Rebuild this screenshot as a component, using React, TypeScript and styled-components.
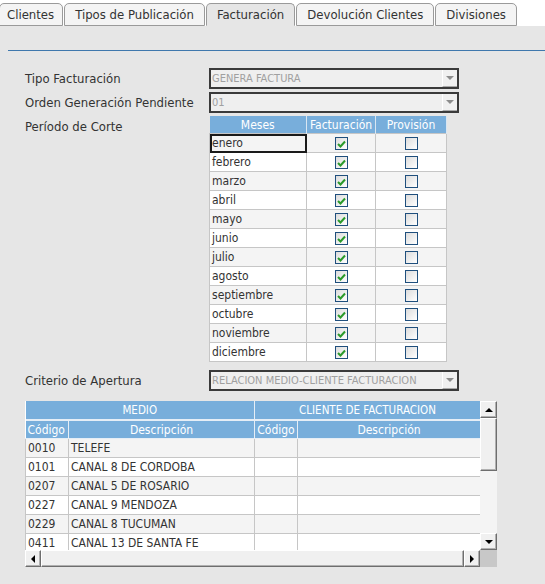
import React from 'react';
import styled, { createGlobalStyle, css } from 'styled-components';

const GlobalStyle = createGlobalStyle`
  body {
    margin: 0;
    background: #ffffff;
    font-family: "DejaVu Sans Condensed", "DejaVu Sans", sans-serif;
    color: #333333;
  }
`;

const TABS = ['Clientes', 'Tipos de Publicación', 'Facturación', 'Devolución Clientes', 'Divisiones'];
const ACTIVE_TAB = 'Facturación';

const MONTHS = [
  'enero', 'febrero', 'marzo', 'abril', 'mayo', 'junio',
  'julio', 'agosto', 'septiembre', 'octubre', 'noviembre', 'diciembre',
];

const MEDIOS = [
  { code: '0010', desc: 'TELEFE' },
  { code: '0101', desc: 'CANAL 8 DE CORDOBA' },
  { code: '0207', desc: 'CANAL 5 DE ROSARIO' },
  { code: '0227', desc: 'CANAL 9 MENDOZA' },
  { code: '0229', desc: 'CANAL 8 TUCUMAN' },
  { code: '0411', desc: 'CANAL 13 DE SANTA FE' },
];

const Page = styled.div`
  width: 545px;
  height: 584px;
  overflow: hidden;
  display: flex;
  flex-direction: column;
`;

const TabBar = styled.div`
  display: flex;
  height: 26px;
  padding-top: 3px;
  box-sizing: border-box;
  background: #ffffff;
`;

const Tab = styled.div<{ $active?: boolean }>`
  display: flex;
  align-items: center;
  padding: 0 10px;
  margin-right: 1px;
  font-size: 13px;
  color: #333333;
  border: 1px solid #9a9a9a;
  border-radius: 5px 5px 0 0;
  background: #f4f4f4;
  &:first-child {
    padding: 0 8px 0 7px;
    margin-left: -1px;
  }
  ${({ $active }) =>
    $active &&
    css`
      background: #e6e6e6;
      border-bottom-color: #e6e6e6;
    `}
`;

const Content = styled.div`
  flex: 1;
  background: #e6e6e6;
  padding: 24px 0 0 0;
`;

const Divider = styled.div`
  margin-left: 8px;
  height: 1px;
  background: #3f78ad;
`;

const Form = styled.div`
  padding: 17px 0 0 25px;
  display: flex;
  flex-direction: column;
`;

const FieldRow = styled.div<{ $gap?: number }>`
  display: flex;
  align-items: flex-start;
  margin-bottom: ${({ $gap }) => $gap ?? 3}px;
`;

const Label = styled.div`
  width: 184px;
  height: 21px;
  line-height: 21px;
  font-size: 13px;
  color: #333333;
`;

const Select = styled.div`
  width: 250px;
  height: 21px;
  box-sizing: border-box;
  border: 2px solid #3a3a3a;
  background: #efefef;
  display: flex;
  align-items: center;
`;

const SelectValue = styled.div`
  flex: 1;
  padding-left: 1px;
  font-size: 11px;
  color: #a0a0a0;
  white-space: nowrap;
  overflow: hidden;
`;

const SelectArrow = styled.div`
  width: 15px;
  height: 100%;
  box-sizing: border-box;
  border-left: 1px solid #ffffff;
  border-bottom: 1px solid #a8a8a8;
  background: #f0f0f0;
  display: flex;
  align-items: center;
  justify-content: center;
  &::after {
    content: '';
    border-left: 4px solid transparent;
    border-right: 4px solid transparent;
    border-top: 4px solid #8c8c8c;
  }
`;

const MonthTable = styled.table`
  border-collapse: collapse;
  width: 237px;
  table-layout: fixed;
  font-size: 12px;
`;

const HeadCell = styled.th`
  height: 17px;
  padding: 0;
  background: #78aedb;
  color: #ffffff;
  font-weight: normal;
  text-align: center;
  border-left: 1px solid #d8e6f2;
  border-right: 1px solid #d8e6f2;
  white-space: nowrap;
  overflow: hidden;
  &:first-child {
    border-left: none;
  }
`;

const BodyRow = styled.tr<{ $alt?: boolean }>`
  background: ${({ $alt }) => ($alt ? '#f4f4f4' : '#ffffff')};
`;

const Cell = styled.td<{ $center?: boolean; $focus?: boolean }>`
  height: 18px;
  padding: 0 0 0 2px;
  border: 1px solid #c6c6c6;
  color: #333333;
  white-space: nowrap;
  overflow: hidden;
  text-align: ${({ $center }) => ($center ? 'center' : 'left')};
  ${({ $center }) => $center && 'padding: 0;'}
  ${({ $focus }) =>
    $focus &&
    css`
      outline: 2px solid #1a1a1a;
      outline-offset: -2px;
    `}
`;

const CheckBox = styled.span`
  display: inline-flex;
  vertical-align: middle;
  align-items: center;
  justify-content: center;
  width: 13px;
  height: 13px;
  box-sizing: border-box;
  border: 1px solid #1f4f7d;
  background: linear-gradient(135deg, #dcdcdc 0%, #ffffff 100%);
`;

const Check = () => (
  <svg width="9" height="8" viewBox="0 0 9 8">
    <path d="M1 4 L3.5 6.5 L8 1.5" stroke="#2a9a2a" strokeWidth="2" fill="none" />
  </svg>
);

const GridBox = styled.div`
  display: grid;
  grid-template-columns: 455px 17px;
  grid-template-rows: 149px 17px;
  margin-top: 10px;
`;

const GridViewport = styled.div`
  overflow: hidden;
  background: #ffffff;
`;

const DataTable = styled.table`
  border-collapse: collapse;
  width: 455px;
  table-layout: fixed;
  font-size: 12px;
`;

const GroupHead = styled.th`
  height: 18px;
  padding: 0;
  background: #78aedb;
  color: #ffffff;
  font-weight: normal;
  font-size: 11.5px;
  border: 1px solid #e6eef6;
  border-top: none;
  &:first-child {
    border-left: none;
  }
`;

const SubHead = styled.th`
  height: 17px;
  padding: 0;
  background: #78aedb;
  color: #ffffff;
  font-weight: normal;
  font-size: 12px;
  border: 1px solid #e6eef6;
  border-top-width: 2px;
  white-space: nowrap;
  overflow: hidden;
  &:first-child {
    border-left: none;
    text-align: left;
    padding-left: 2px;
  }
`;

const buttonFace = css`
  box-sizing: border-box;
  background: #f0f0f0;
  border: 1px solid;
  border-color: #ffffff #6e6e6e #6e6e6e #ffffff;
  box-shadow: inset -1px -1px 0 #b0b0b0;
`;

const VScroll = styled.div`
  display: flex;
  flex-direction: column;
  background-color: #f4f4f4;
  background-image: radial-gradient(#e2e2e2 0.6px, transparent 0.7px);
  background-size: 2px 2px;
`;

const ScrollBtn = styled.div<{ $dir: 'up' | 'down' | 'left' | 'right' }>`
  ${buttonFace}
  width: ${({ $dir }) => ($dir === 'left' || $dir === 'right' ? 16 : 17)}px;
  height: 17px;
  flex-shrink: 0;
  display: flex;
  align-items: center;
  justify-content: center;
  &::after {
    content: '';
    ${({ $dir }) =>
      $dir === 'up'
        ? 'border-left:4px solid transparent;border-right:4px solid transparent;border-bottom:4px solid #000;'
        : $dir === 'down'
        ? 'border-left:4px solid transparent;border-right:4px solid transparent;border-top:4px solid #000;'
        : $dir === 'left'
        ? 'border-top:4px solid transparent;border-bottom:4px solid transparent;border-right:4px solid #000;'
        : 'border-top:4px solid transparent;border-bottom:4px solid transparent;border-left:4px solid #000;'}
  }
`;

const VThumb = styled.div`
  ${buttonFace}
  width: 17px;
  height: 53px;
`;

const Spacer = styled.div`
  flex: 1;
`;

const HScroll = styled.div`
  display: flex;
  background: #f4f4f4;
`;

const HThumb = styled.div`
  ${buttonFace}
  flex: 1;
  height: 17px;
`;

const Corner = styled.div`
  background: #c8c8c8;
`;

const SelectField = ({ value }: { value: string }) => (
  <Select>
    <SelectValue>{value}</SelectValue>
    <SelectArrow />
  </Select>
);

export default function App() {
  return (
    <Page>
      <GlobalStyle />
      <TabBar>
        {TABS.map((t) => (
          <Tab key={t} $active={t === ACTIVE_TAB}>
            {t}
          </Tab>
        ))}
      </TabBar>
      <Content>
        <Divider />
        <Form>
          <FieldRow>
            <Label>Tipo Facturación</Label>
            <SelectField value="GENERA FACTURA" />
          </FieldRow>
          <FieldRow>
            <Label>Orden Generación Pendiente</Label>
            <SelectField value="01" />
          </FieldRow>
          <FieldRow $gap={8}>
            <Label>Período de Corte</Label>
            <MonthTable>
              <colgroup>
                <col style={{ width: 97 }} />
                <col style={{ width: 69 }} />
                <col style={{ width: 71 }} />
              </colgroup>
              <thead>
                <tr>
                  <HeadCell>Meses</HeadCell>
                  <HeadCell>Facturación</HeadCell>
                  <HeadCell>Provisión</HeadCell>
                </tr>
              </thead>
              <tbody>
                {MONTHS.map((m, i) => (
                  <BodyRow key={m} $alt={i % 2 === 0}>
                    <Cell $focus={i === 0}>{m}</Cell>
                    <Cell $center>
                      <CheckBox>
                        <Check />
                      </CheckBox>
                    </Cell>
                    <Cell $center>
                      <CheckBox />
                    </Cell>
                  </BodyRow>
                ))}
              </tbody>
            </MonthTable>
          </FieldRow>
          <FieldRow $gap={0}>
            <Label>Criterio de Apertura</Label>
            <SelectField value="RELACION MEDIO-CLIENTE FACTURACION" />
          </FieldRow>
          <GridBox>
            <GridViewport>
              <DataTable>
                <colgroup>
                  <col style={{ width: 43 }} />
                  <col style={{ width: 186 }} />
                  <col style={{ width: 43 }} />
                  <col style={{ width: 183 }} />
                </colgroup>
                <thead>
                  <tr>
                    <GroupHead colSpan={2}>MEDIO</GroupHead>
                    <GroupHead colSpan={2}>CLIENTE DE FACTURACION</GroupHead>
                  </tr>
                  <tr>
                    <SubHead>Código</SubHead>
                    <SubHead>Descripción</SubHead>
                    <SubHead>Código</SubHead>
                    <SubHead>Descripción</SubHead>
                  </tr>
                </thead>
                <tbody>
                  {MEDIOS.map((r, i) => (
                    <BodyRow key={r.code} $alt={i % 2 === 0}>
                      <Cell>{r.code}</Cell>
                      <Cell>{r.desc}</Cell>
                      <Cell />
                      <Cell />
                    </BodyRow>
                  ))}
                </tbody>
              </DataTable>
            </GridViewport>
            <VScroll>
              <ScrollBtn $dir="up" />
              <VThumb />
              <Spacer />
              <ScrollBtn $dir="down" />
            </VScroll>
            <HScroll>
              <ScrollBtn $dir="left" />
              <HThumb />
              <ScrollBtn $dir="right" />
            </HScroll>
            <Corner />
          </GridBox>
        </Form>
      </Content>
    </Page>
  );
}
